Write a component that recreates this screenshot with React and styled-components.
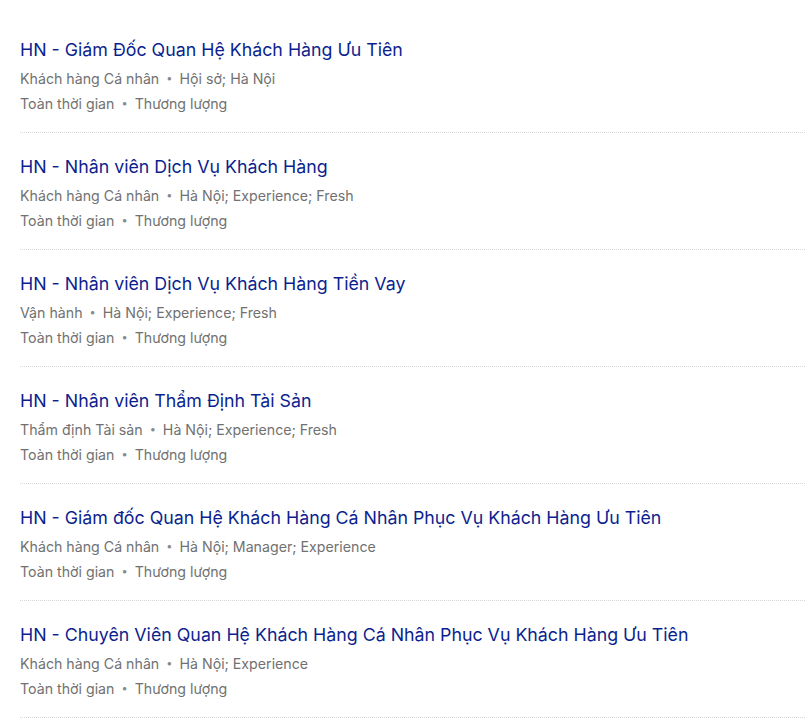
import React from "react";
import styled, { createGlobalStyle } from "styled-components";

const GlobalStyle = createGlobalStyle`
  html, body {
    margin: 0;
    padding: 0;
    background: #ffffff;
  }
  body {
    font-family: Inter, "Liberation Sans", Arial, sans-serif;
  }
`;

const jobs = [
  {
    title: "HN - Giám Đốc Quan Hệ Khách Hàng Ưu Tiên",
    dept: "Khách hàng Cá nhân",
    place: "Hội sở; Hà Nội",
  },
  {
    title: "HN - Nhân viên Dịch Vụ Khách Hàng",
    dept: "Khách hàng Cá nhân",
    place: "Hà Nội; Experience; Fresh",
  },
  {
    title: "HN - Nhân viên Dịch Vụ Khách Hàng Tiền Vay",
    dept: "Vận hành",
    place: "Hà Nội; Experience; Fresh",
  },
  {
    title: "HN - Nhân viên Thẩm Định Tài Sản",
    dept: "Thẩm định Tài sản",
    place: "Hà Nội; Experience; Fresh",
  },
  {
    title: "HN - Giám đốc Quan Hệ Khách Hàng Cá Nhân Phục Vụ Khách Hàng Ưu Tiên",
    dept: "Khách hàng Cá nhân",
    place: "Hà Nội; Manager; Experience",
  },
  {
    title: "HN - Chuyên Viên Quan Hệ Khách Hàng Cá Nhân Phục Vụ Khách Hàng Ưu Tiên",
    dept: "Khách hàng Cá nhân",
    place: "Hà Nội; Experience",
  },
];

const List = styled.ul`
  list-style: none;
  margin: 0;
  padding: 16px 0 0 20px;
`;

const Item = styled.li`
  padding: 22px 0 16px;
  border-bottom: 1px dotted #d6d6d6;
`;

const Title = styled.a`
  display: block;
  margin-bottom: 4px;
  font-size: 17.8px;
  line-height: 24px;
  color: #0c1f8f;
  text-decoration: none;
  cursor: pointer;
`;

const Meta = styled.div`
  display: flex;
  align-items: center;
  font-size: 14.2px;
  line-height: 25px;
  color: #717171;
`;

const Dot = styled.span`
  margin: 0 7px;
  font-size: 11px;
  color: #8a8a8a;
`;

function JobRow({ job }) {
  return (
    <Item>
      <Title>{job.title}</Title>
      <Meta>
        <span>{job.dept}</span>
        <Dot>•</Dot>
        <span>{job.place}</span>
      </Meta>
      <Meta>
        <span>Toàn thời gian</span>
        <Dot>•</Dot>
        <span>Thương lượng</span>
      </Meta>
    </Item>
  );
}

export default function App() {
  return (
    <>
      <GlobalStyle />
      <List>
        {jobs.map((job) => (
          <JobRow key={job.title} job={job} />
        ))}
      </List>
    </>
  );
}
